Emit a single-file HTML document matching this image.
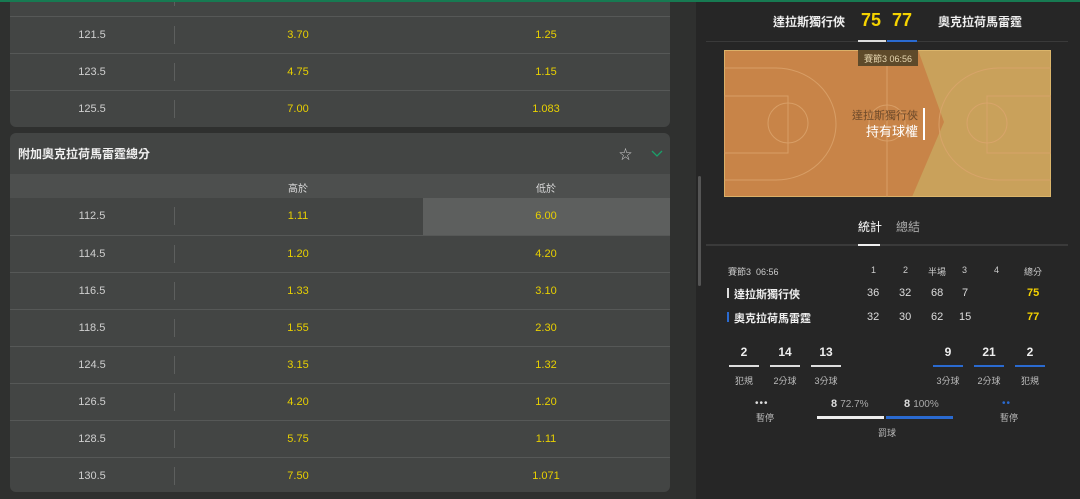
<!DOCTYPE html>
<html><head><meta charset="utf-8"><style>
*{margin:0;padding:0;box-sizing:border-box}
body{width:1080px;height:499px;overflow:hidden;background:#2f302f;font-family:"Liberation Sans","Noto Sans CJK TC",sans-serif;position:relative;color:#ddd}
.topline{position:absolute;left:0;top:0;width:1080px;height:2px;background:#177a52;z-index:5}
.card{position:absolute;left:10px;width:660px;background:#434544;border-radius:6px;overflow:hidden}
.row{position:absolute;left:0;width:660px;height:37px;border-top:1px solid #565857;font-size:11px}
.row span{position:absolute;top:0;line-height:36px;transform:translateX(-50%)}
.row .a{left:82px;color:#cfcfcf}.row .b{left:288px;color:#e8d000}.row .c{left:536px;color:#e8d000}
.row i{position:absolute;left:164px;top:9px;width:1px;height:18px;background:#5d5f5e}
.right{position:absolute;left:696px;top:0;width:384px;height:499px;background:#262626}
.t{position:absolute;white-space:nowrap}
</style></head><body>
<div class="topline"></div>
<div class="card" style="top:-10px;height:137px">
 <div class="row" style="top:-11px;border:none"><span class="a">119.5</span><i></i><span class="b">2.75</span><span class="c">1.37</span></div>
 <div class="row" style="top:26px"><span class="a">121.5</span><i></i><span class="b">3.70</span><span class="c">1.25</span></div>
 <div class="row" style="top:63px"><span class="a">123.5</span><i></i><span class="b">4.75</span><span class="c">1.15</span></div>
 <div class="row" style="top:100px"><span class="a">125.5</span><i></i><span class="b">7.00</span><span class="c">1.083</span></div>
</div>
<div class="card" style="top:133px;height:359px">
 <div class="t" style="left:8px;top:12px;font-size:12px;color:#f0f0f0;font-weight:bold">附加奧克拉荷馬雷霆總分</div>
 <div class="t" style="left:609px;top:11px;font-size:13px;color:#ccc">☆</div>
 <svg class="t" style="left:641px;top:17px" width="12" height="8"><path d="M1 1L6 6L11 1" stroke="#1aa06a" stroke-width="1.3" fill="none"/></svg>
 <div style="position:absolute;left:0;top:41px;width:660px;height:24px;background:#4d4f4e"></div>
 <div class="t" style="left:278px;top:47px;font-size:10px;color:#ddd">高於</div>
 <div class="t" style="left:526px;top:47px;font-size:10px;color:#ddd">低於</div>
 <div style="position:absolute;left:413px;top:65px;width:247px;height:37px;background:#5d5f5e"></div>
 <div class="row" style="top:65px;border:none"><span class="a">112.5</span><i></i><span class="b">1.11</span><span class="c">6.00</span></div>
 <div class="row" style="top:102px"><span class="a">114.5</span><i></i><span class="b">1.20</span><span class="c">4.20</span></div>
 <div class="row" style="top:139px"><span class="a">116.5</span><i></i><span class="b">1.33</span><span class="c">3.10</span></div>
 <div class="row" style="top:176px"><span class="a">118.5</span><i></i><span class="b">1.55</span><span class="c">2.30</span></div>
 <div class="row" style="top:213px"><span class="a">124.5</span><i></i><span class="b">3.15</span><span class="c">1.32</span></div>
 <div class="row" style="top:250px"><span class="a">126.5</span><i></i><span class="b">4.20</span><span class="c">1.20</span></div>
 <div class="row" style="top:287px"><span class="a">128.5</span><i></i><span class="b">5.75</span><span class="c">1.11</span></div>
 <div class="row" style="top:324px"><span class="a">130.5</span><i></i><span class="b">7.50</span><span class="c">1.071</span></div>
</div>
<div style="position:absolute;left:698px;top:176px;width:3px;height:110px;background:#555;border-radius:2px;z-index:3"></div>
<div class="right">
 <div class="t" style="left:77px;top:13px;font-size:12px;font-weight:bold;color:#eee">達拉斯獨行俠</div>
 <div class="t" style="left:165px;top:10px;font-size:18px;font-weight:bold;color:#f5d300">75</div>
 <div class="t" style="left:196px;top:10px;font-size:18px;font-weight:bold;color:#f5d300">77</div>
 <div class="t" style="left:242px;top:13px;font-size:12px;font-weight:bold;color:#eee">奧克拉荷馬雷霆</div>
 <div style="position:absolute;left:10px;top:41px;width:362px;height:1px;background:#3a3a3a"></div>
 <div style="position:absolute;left:162px;top:40px;width:28px;height:2px;background:#ddd"></div>
 <div style="position:absolute;left:191px;top:40px;width:30px;height:2px;background:#2a6ad0"></div>
 <svg class="t" style="left:28px;top:50px" width="327" height="147" viewBox="0 0 327 147">
  <rect x="0" y="0" width="327" height="147" fill="#c9a15b"/>
  <polygon points="0,0 194,0 220,72 188,147 0,147" fill="#c88448"/>
  <g stroke="#dca56e" stroke-width="1" fill="none" opacity="0.8">
   <rect x="0.5" y="0.5" width="326" height="146" stroke="#e0bb70"/>
   <line x1="163" y1="0" x2="163" y2="147"/>
   <circle cx="163" cy="73" r="18"/>
   <rect x="0" y="46" width="64" height="57"/><circle cx="64" cy="73" r="20"/>
   <path d="M0 18 H52 A60 56 0 0 1 52 130 H0"/>
   <rect x="263" y="46" width="64" height="57"/><circle cx="263" cy="73" r="20"/>
   <path d="M327 18 H275 A60 56 0 0 0 275 130 H327"/>
  </g>
  <rect x="134" y="0" width="60" height="16" fill="#5e4a2a"/>
  <text x="164" y="12" font-size="9" fill="#e6d6b0" text-anchor="middle" font-family="Liberation Sans,Noto Sans CJK TC,sans-serif">賽節3 06:56</text>
  <text x="194" y="69" font-size="11" fill="#6e4a2a" text-anchor="end" font-family="Liberation Sans,Noto Sans CJK TC,sans-serif">達拉斯獨行俠</text>
  <text x="194" y="86" font-size="13" fill="#fff" text-anchor="end" font-family="Liberation Sans,Noto Sans CJK TC,sans-serif">持有球權</text>
  <rect x="199" y="58" width="2" height="32" fill="#fff"/>
 </svg>
 <div class="t" style="left:162px;top:218px;font-size:12px;color:#fff">統計</div>
 <div class="t" style="left:200px;top:218px;font-size:12px;color:#aaa">總結</div>
 <div style="position:absolute;left:10px;top:244px;width:362px;height:2px;background:#3a3a3a"></div>
 <div style="position:absolute;left:162px;top:244px;width:22px;height:2px;background:#eee"></div>
 <div class="t" style="left:32px;top:265px;font-size:9px;color:#ccc">賽節3 &nbsp;06:56</div>
 <div class="t" style="left:175px;top:265px;font-size:9px;color:#ccc">1</div>
 <div class="t" style="left:207px;top:265px;font-size:9px;color:#ccc">2</div>
 <div class="t" style="left:232px;top:265px;font-size:9px;color:#ccc">半場</div>
 <div class="t" style="left:266px;top:265px;font-size:9px;color:#ccc">3</div>
 <div class="t" style="left:298px;top:265px;font-size:9px;color:#ccc">4</div>
 <div class="t" style="left:328px;top:265px;font-size:9px;color:#ccc">總分</div>
 <div style="position:absolute;left:31px;top:288px;width:2px;height:10px;background:#ddd"></div>
 <div style="position:absolute;left:31px;top:312px;width:2px;height:10px;background:#2a6ad0"></div>
 <div class="t" style="left:38px;top:286px;font-size:11px;font-weight:bold;color:#eee">達拉斯獨行俠</div>
 <div class="t" style="left:38px;top:310px;font-size:11px;font-weight:bold;color:#eee">奧克拉荷馬雷霆</div>
 <div class="t" style="left:171px;top:287px;font-size:11px;color:#ddd">36</div><div class="t" style="left:203px;top:287px;font-size:11px;color:#ddd">32</div><div class="t" style="left:235px;top:287px;font-size:11px;color:#ddd">68</div><div class="t" style="left:266px;top:287px;font-size:11px;color:#ddd">7</div><div class="t" style="left:331px;top:287px;font-size:11px;font-weight:bold;color:#f5d300">75</div>
 <div class="t" style="left:171px;top:311px;font-size:11px;color:#ddd">32</div><div class="t" style="left:203px;top:311px;font-size:11px;color:#ddd">30</div><div class="t" style="left:235px;top:311px;font-size:11px;color:#ddd">62</div><div class="t" style="left:263px;top:311px;font-size:11px;color:#ddd">15</div><div class="t" style="left:331px;top:311px;font-size:11px;font-weight:bold;color:#f5d300">77</div>
 <div class="t" style="left:33px;top:345px;width:30px;text-align:center;font-size:12px;font-weight:bold;color:#eee">2</div>
 <div class="t" style="left:74px;top:345px;width:30px;text-align:center;font-size:12px;font-weight:bold;color:#eee">14</div>
 <div class="t" style="left:115px;top:345px;width:30px;text-align:center;font-size:12px;font-weight:bold;color:#eee">13</div>
 <div class="t" style="left:237px;top:345px;width:30px;text-align:center;font-size:12px;font-weight:bold;color:#eee">9</div>
 <div class="t" style="left:278px;top:345px;width:30px;text-align:center;font-size:12px;font-weight:bold;color:#eee">21</div>
 <div class="t" style="left:319px;top:345px;width:30px;text-align:center;font-size:12px;font-weight:bold;color:#eee">2</div>
 <div style="position:absolute;left:33px;top:365px;width:30px;height:2px;background:#ddd"></div>
 <div style="position:absolute;left:74px;top:365px;width:30px;height:2px;background:#ddd"></div>
 <div style="position:absolute;left:115px;top:365px;width:30px;height:2px;background:#ddd"></div>
 <div style="position:absolute;left:237px;top:365px;width:30px;height:2px;background:#2a6ad0"></div>
 <div style="position:absolute;left:278px;top:365px;width:30px;height:2px;background:#2a6ad0"></div>
 <div style="position:absolute;left:319px;top:365px;width:30px;height:2px;background:#2a6ad0"></div>
 <div class="t" style="left:28px;top:374px;width:40px;text-align:center;font-size:9px;color:#bbb">犯規</div>
 <div class="t" style="left:69px;top:374px;width:40px;text-align:center;font-size:9px;color:#bbb">2分球</div>
 <div class="t" style="left:110px;top:374px;width:40px;text-align:center;font-size:9px;color:#bbb">3分球</div>
 <div class="t" style="left:232px;top:374px;width:40px;text-align:center;font-size:9px;color:#bbb">3分球</div>
 <div class="t" style="left:273px;top:374px;width:40px;text-align:center;font-size:9px;color:#bbb">2分球</div>
 <div class="t" style="left:314px;top:374px;width:40px;text-align:center;font-size:9px;color:#bbb">犯規</div>
 <div class="t" style="left:59px;top:398px;font-size:10px;color:#ddd;letter-spacing:1px">•••</div>
 <div class="t" style="left:60px;top:411px;font-size:9px;color:#bbb">暫停</div>
 <div class="t" style="left:306px;top:398px;font-size:10px;color:#2a6ad0;letter-spacing:1px">••</div>
 <div class="t" style="left:304px;top:411px;font-size:9px;color:#bbb">暫停</div>
 <div class="t" style="left:135px;top:398px;font-size:11px;color:#ddd"><b>8</b> <span style="color:#aaa;font-size:10px">72.7%</span></div>
 <div class="t" style="left:208px;top:398px;font-size:11px;color:#ddd"><b>8</b> <span style="color:#aaa;font-size:10px">100%</span></div>
 <div style="position:absolute;left:121px;top:416px;width:67px;height:3px;background:#eee"></div>
 <div style="position:absolute;left:190px;top:416px;width:67px;height:3px;background:#2a6ad0"></div>
 <div class="t" style="left:182px;top:426px;font-size:9px;color:#bbb">罰球</div>
</div>
</body></html>
